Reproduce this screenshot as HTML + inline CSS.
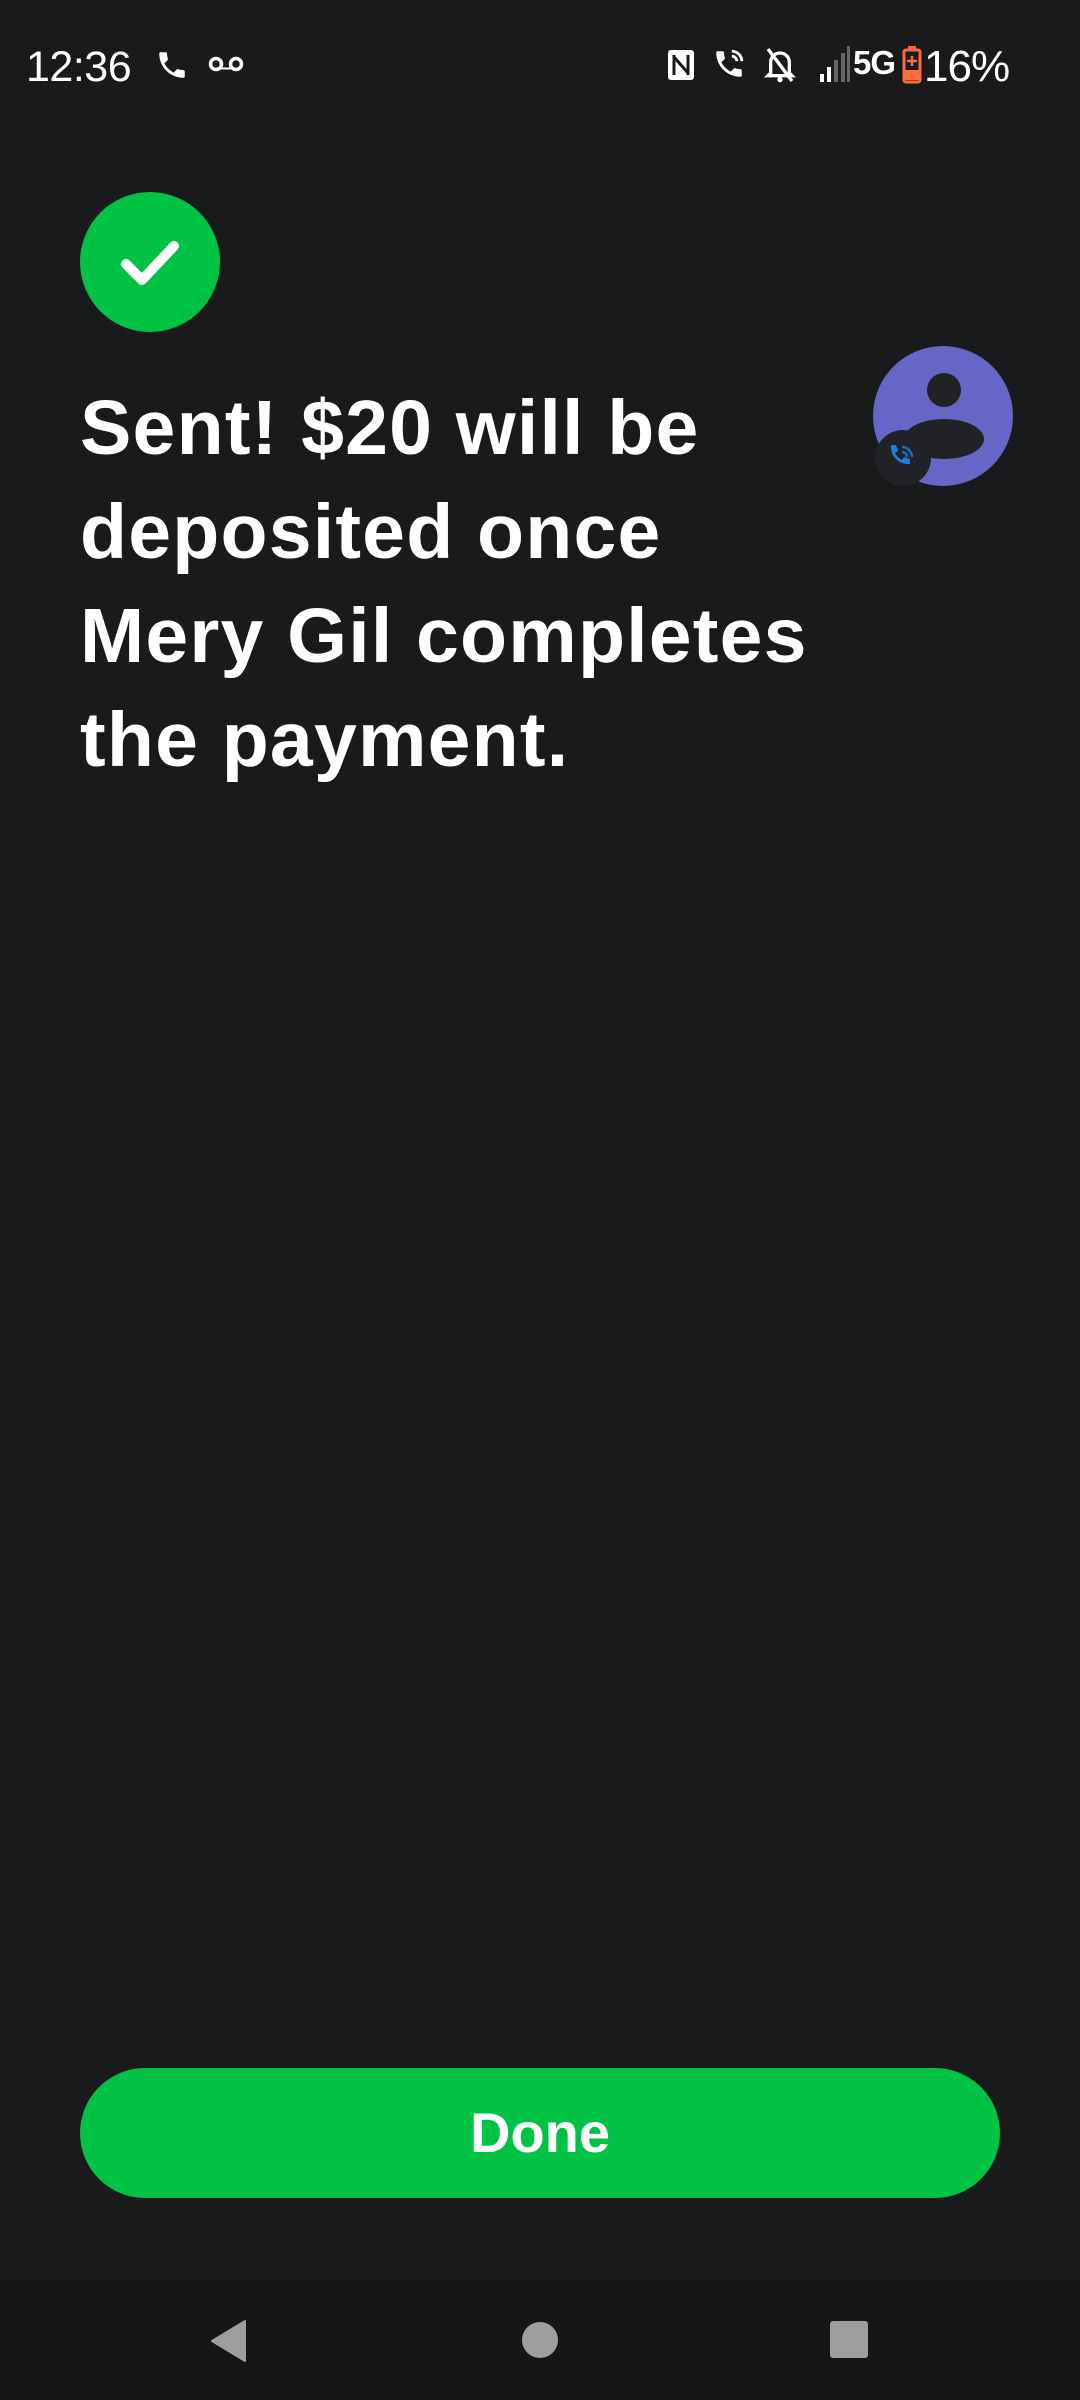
<!DOCTYPE html>
<html><head><meta charset="utf-8"><style>
html,body{margin:0;padding:0;width:1080px;height:2400px;background:#191a1c;overflow:hidden;font-family:"Liberation Sans",sans-serif;color:#fff}
.abs{position:absolute}
.t{position:absolute;left:26px;top:43px;font-size:43px;color:#fff;letter-spacing:-0.5px}
h1{position:absolute;left:80px;top:376px;margin:0;font-size:77px;line-height:104px;font-weight:bold;letter-spacing:1.2px}
.btn{position:absolute;left:80px;top:2068px;width:920px;height:130px;border-radius:65px;background:#00c244;color:#fff;font-weight:bold;font-size:56px;text-align:center;line-height:130px}
.nav{position:absolute;left:0;top:2280px;width:1080px;height:120px;background:#151618}
</style></head><body>
<div class="t">12:36</div>
<svg class="abs" style="left:155px;top:48px" width="34" height="34" viewBox="0 0 24 24"><path fill="#fff" d="M6.6 10.8c1.4 2.8 3.8 5.1 6.6 6.6l2.2-2.2c.3-.3.7-.4 1-.2 1.1.4 2.3.6 3.6.6.6 0 1 .4 1 1V20c0 .6-.4 1-1 1C10.6 21 3 13.4 3 4c0-.6.4-1 1-1h3.5c.6 0 1 .4 1 1 0 1.3.2 2.5.6 3.6.1.3 0 .7-.2 1z"/></svg>
<svg class="abs" style="left:208px;top:54px" width="36" height="20" viewBox="0 0 36 20"><circle cx="8" cy="10" r="5.5" fill="none" stroke="#fff" stroke-width="3.5"/><circle cx="28" cy="10" r="5.5" fill="none" stroke="#fff" stroke-width="3.5"/><rect x="8" y="13.5" width="20" height="2" fill="#fff"/></svg>
<svg class="abs" style="left:666px;top:48px" width="30" height="34" viewBox="0 0 30 34"><rect x="2" y="2" width="26" height="30" rx="3" fill="#fff"/><path d="M8 7v20M22 7v20M8 9l14 16" stroke="#191a1c" stroke-width="3" fill="none"/></svg>
<svg class="abs" style="left:712px;top:46px" width="34" height="36" viewBox="0 0 24 24"><path fill="#fff" d="M6.6 10.8c1.4 2.8 3.8 5.1 6.6 6.6l2.2-2.2c.3-.3.7-.4 1-.2 1.1.4 2.3.6 3.6.6.6 0 1 .4 1 1V20c0 .6-.4 1-1 1C10.6 21 3 13.4 3 4c0-.6.4-1 1-1h3.5c.6 0 1 .4 1 1 0 1.3.2 2.5.6 3.6.1.3 0 .7-.2 1z"/><path d="M14 3a7 7 0 0 1 7 7M14 6.5a3.5 3.5 0 0 1 3.5 3.5" stroke="#fff" stroke-width="2" fill="none"/></svg>
<svg class="abs" style="left:764px;top:46px" width="32" height="38" viewBox="0 0 24 28"><path d="M5 20V12a7 7 0 0 1 14 0v8l2 2H3z" fill="none" stroke="#fff" stroke-width="2.5"/><path d="M3 2l18 24" stroke="#fff" stroke-width="2.5"/><circle cx="12" cy="25" r="2" fill="#fff"/></svg>
<svg class="abs" style="left:818px;top:46px" width="32" height="36" viewBox="0 0 32 36"><rect x="2" y="28" width="4" height="8" fill="#fff"/><rect x="9" y="21" width="4" height="15" fill="#fff"/><rect x="16" y="14" width="4" height="22" fill="#666"/><rect x="23" y="7" width="4" height="29" fill="#666"/><rect x="29" y="0" width="3" height="36" fill="#666"/></svg>
<div class="abs" style="left:853px;top:44px;font-size:33px;font-weight:bold;letter-spacing:-1px">5G</div>
<svg class="abs" style="left:902px;top:46px" width="20" height="38" viewBox="0 0 20 38"><rect x="6" y="0" width="8" height="4" fill="#ff6a3d"/><rect x="2" y="4" width="16" height="32" rx="2" fill="none" stroke="#ff6a3d" stroke-width="3"/><rect x="3.5" y="24" width="13" height="10" fill="#ff6a3d"/><path d="M10 10v10M5 15h10" stroke="#ff6a3d" stroke-width="2.5"/></svg>
<div class="abs" style="left:924px;top:42px;font-size:44px;letter-spacing:-1px">16%</div>

<div class="abs" style="left:80px;top:192px;width:140px;height:140px;border-radius:50%;background:#00c244"></div>
<svg class="abs" style="left:80px;top:192px" width="140" height="140" viewBox="0 0 140 140"><path d="M46 72l16 16 32-34" stroke="#fff" stroke-width="10" fill="none" stroke-linecap="round" stroke-linejoin="round"/></svg>

<h1>Sent! $20 will be<br>deposited once<br>Mery Gil completes<br>the payment.</h1>

<svg class="abs" style="left:873px;top:346px" width="140" height="140" viewBox="0 0 140 140"><circle cx="70" cy="70" r="70" fill="#6566c6"/><circle cx="71" cy="44" r="17" fill="#212226"/><ellipse cx="71" cy="93" rx="40" ry="20" fill="#212226"/></svg>
<svg class="abs" style="left:874px;top:429px" width="58" height="58" viewBox="0 0 58 58"><circle cx="29" cy="29" r="28" fill="#212226"/><path fill="#1a7fe0" d="M17 16h5l2 6-3 2a14 14 0 0 0 7 7l2-3 6 2v5c-11 1-20-8-19-19z"/><path d="M28 18a10 10 0 0 1 10 10M28 23a5 5 0 0 1 5 5" stroke="#1a6fc0" stroke-width="2.5" fill="none"/></svg>

<div class="btn">Done</div>
<div class="nav"></div>
<svg class="abs" style="left:208px;top:2320px" width="40" height="42" viewBox="0 0 40 42"><path d="M37 1L4 21l33 20z" fill="#9e9e9e" stroke="#9e9e9e" stroke-linejoin="round" stroke-width="2"/></svg>
<div class="abs" style="left:522px;top:2322px;width:36px;height:36px;border-radius:50%;background:#9e9e9e"></div>
<div class="abs" style="left:830px;top:2321px;width:38px;height:37px;border-radius:3px;background:#9e9e9e"></div>
</body></html>
